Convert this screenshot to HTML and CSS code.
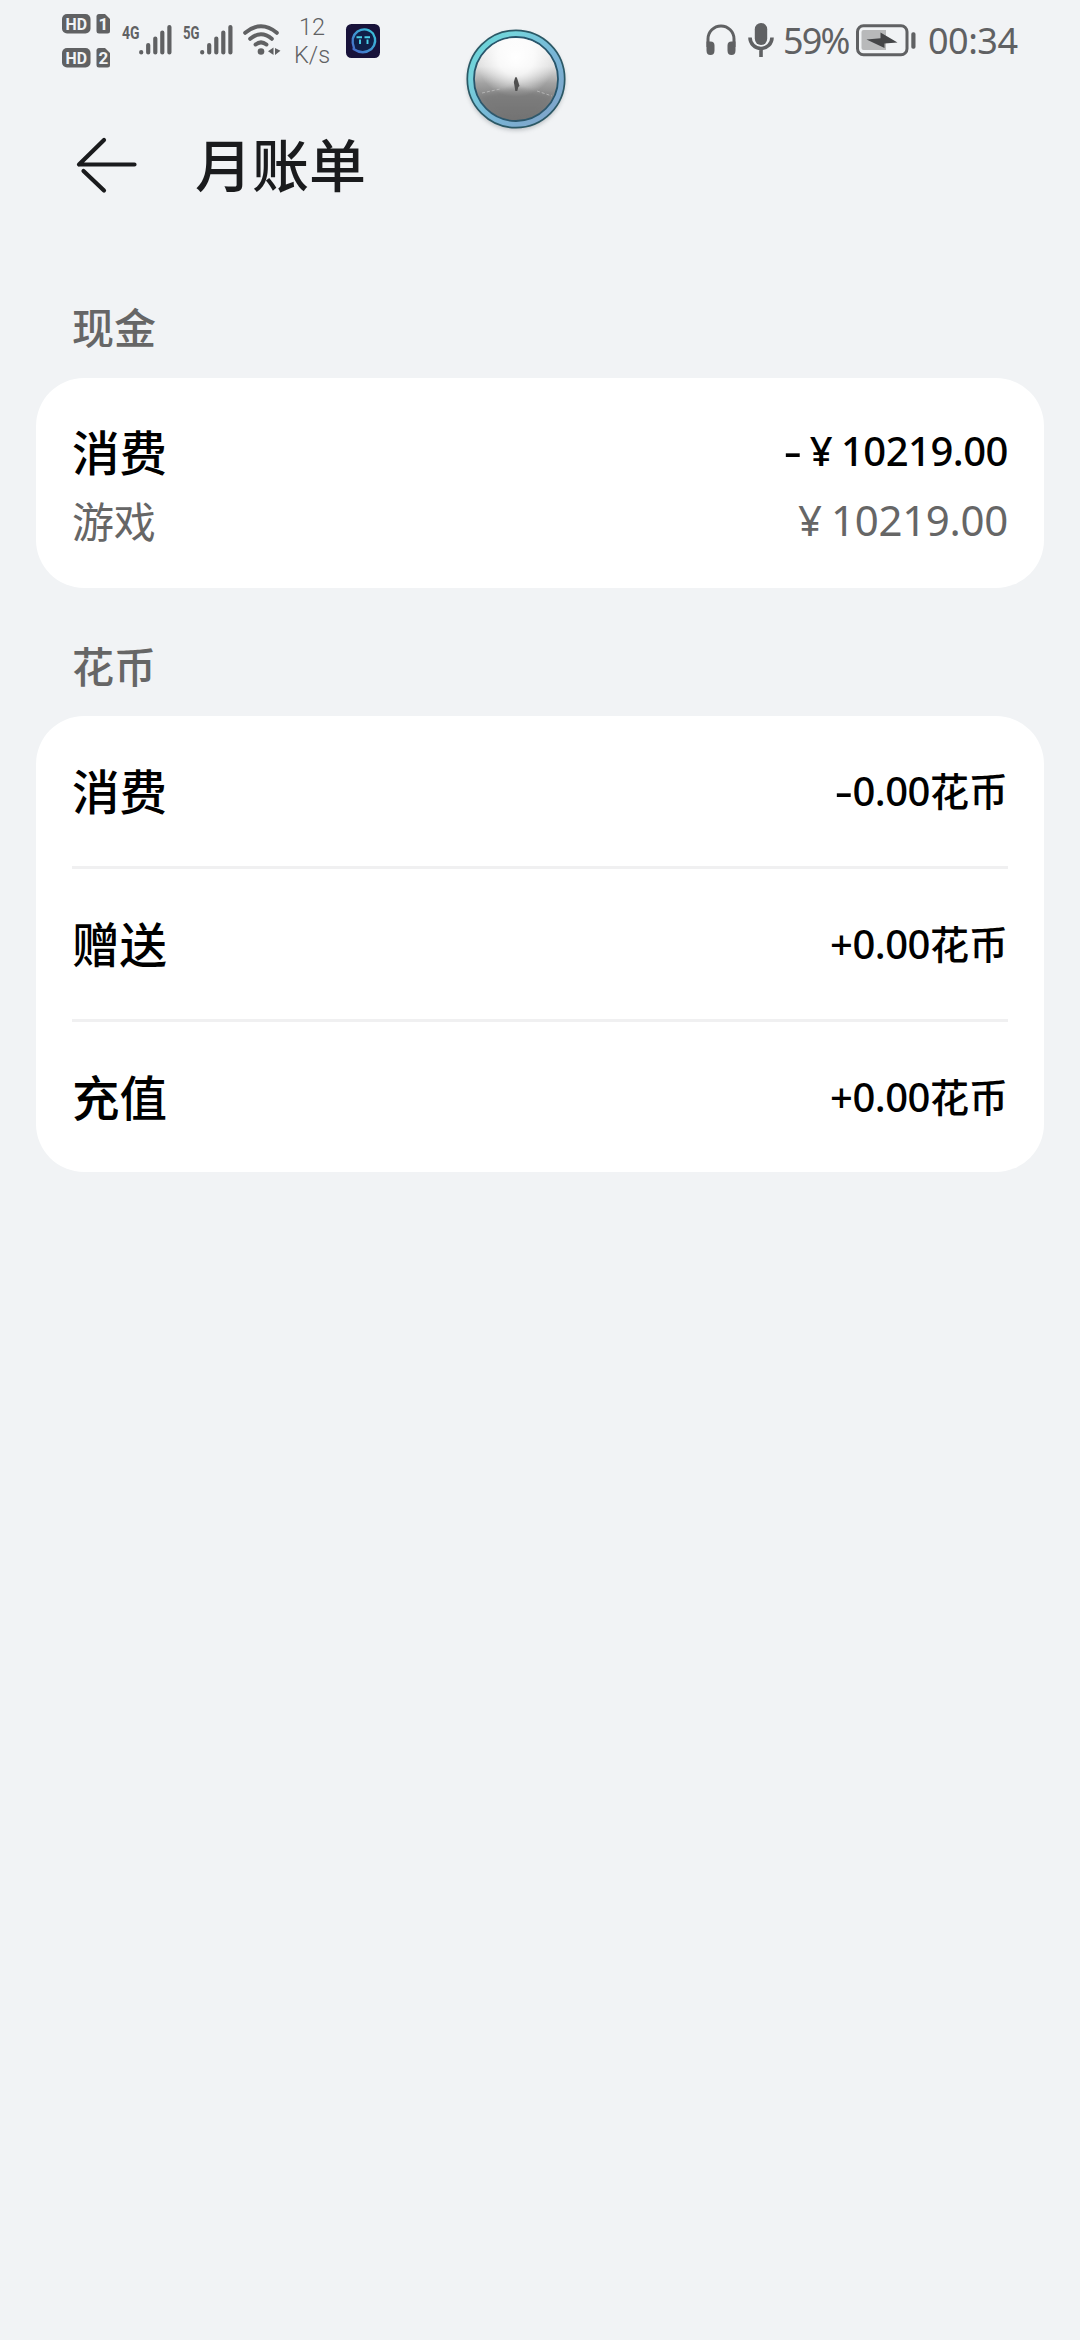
FILE: index.html
```html
<!DOCTYPE html>
<html lang="zh-CN">
<head>
<meta charset="utf-8">
<title>月账单</title>
<link rel="stylesheet" href="styles.css">
</head>
<body>
<header class="status">
  <div class="status-side">
    <svg class="hd" width="50" height="54" viewBox="0 0 50 54">
      <g fill="#606163">
        <rect x="0" y="0" width="28.500" height="19.500" rx="5"/>
        <path d="M37 0h6l5 5v12q0 2.500-2.500 2.500h-8.500q-2.500 0-2.500-2.500v-14.500q0-2.500 2.500-2.500z"/>
        <rect x="0" y="34" width="28.500" height="19.500" rx="5"/>
        <path d="M37 34h6l5 5v12q0 2.500-2.500 2.500h-8.500q-2.500 0-2.500-2.500v-14.500q0-2.500 2.500-2.500z"/>
      </g>
      <g class="hd-text">
        <text x="3.500" y="16" textLength="21.500" lengthAdjust="spacingAndGlyphs">HD</text>
        <text x="36.500" y="16">1</text>
        <text x="3.500" y="50" textLength="21.500" lengthAdjust="spacingAndGlyphs">HD</text>
        <text x="36.500" y="50">2</text>
      </g>
    </svg>
    <svg class="signal signal-first" width="51" height="32" viewBox="0 0 51 32">
      <text class="net" x="0" y="14.500" textLength="17.500" lengthAdjust="spacingAndGlyphs">4G</text>
      <path class="bars" d="M19.200 28v.5M26.200 21v7.500M33.300 14.500v14M40.300 8.500v20M47.400 3v25.500"/>
    </svg>
    <svg class="signal" width="51" height="32" viewBox="0 0 51 32">
      <text class="net" x="0" y="14.500" textLength="16.500" lengthAdjust="spacingAndGlyphs">5G</text>
      <path class="bars" d="M19.200 28v.5M26.200 21v7.500M33.300 14.500v14M40.300 8.500v20M47.400 3v25.500"/>
    </svg>
    <svg class="wifi" width="38" height="32" viewBox="0 0 38 32">
      <g fill="none" stroke="#606163" stroke-width="4" stroke-linecap="round">
        <path d="M2.200 8.800Q18-4.200 33.800 8.800"/>
        <path d="M7.200 14.800Q18 5.800 28.800 14.800"/>
        <path d="M12.600 20.500Q18 16.200 23.400 20.500"/>
      </g>
      <circle cx="18" cy="27.500" r="3.300" fill="#606163"/>
      <path d="M30.500 23.500v7.500l-5.500-3.700zM32 24l5.500 2.700-5.500 4.300z" fill="#606163"/>
    </svg>
    <div class="speed"><span>12</span><span>K/s</span></div>
    <svg class="app" width="34" height="34" viewBox="0 0 34 34">
      <defs><linearGradient id="face" x1="0" y1="1" x2="1" y2="0"><stop offset="0" stop-color="#4668c8"/><stop offset="1" stop-color="#38c8dc"/></linearGradient></defs>
      <rect width="34" height="34" rx="5.500" fill="#18123a"/>
      <circle cx="17.500" cy="17" r="11.500" fill="#101f48"/>
      <path d="M8 24Q4 13 11.500 7.500Q20 2.500 27 9.500Q32 18 25.500 25Q17 31.500 7.500 25" fill="none" stroke="url(#face)" stroke-width="2.300" stroke-linecap="round"/>
      <path d="M10.500 13.200h5.500M18.500 13.200h5.500M14 15.500v4.500M21.500 15.500v4.500" fill="none" stroke="#4ad0e8" stroke-width="1.900"/>
    </svg>
  </div>
  <div class="status-side">
    <svg class="phones" width="30" height="32" viewBox="0 0 30 32">
      <path d="M2 23V15a13 13 0 0 1 26 0v8" fill="none" stroke="#606163" stroke-width="3"/>
      <path d="M.5 17.500h4q4 0 4 4v5q0 4.500-4 4.500t-4-4.500zM29.500 17.500h-4q-4 0-4 4v5q0 4.500 4 4.500t4-4.500z" fill="#606163"/>
    </svg>
    <svg class="mic" width="26" height="34" viewBox="0 0 26 34">
      <rect x="6.800" y="0" width="12.400" height="22" rx="6.200" fill="#606163"/>
      <path d="M2 14.500a11 11 0 0 0 22 0M13 25.500V34" fill="none" stroke="#606163" stroke-width="3.600"/>
    </svg>
    <span class="status-text percent">59%</span>
    <svg class="battery" width="60" height="32" viewBox="0 0 60 32">
      <rect x="1.500" y="1.800" width="49.500" height="29" rx="6" fill="none" stroke="#606163" stroke-width="3"/>
      <path d="M7.500 6H30v20H7.500q-2 0-2-2V8q0-2 2-2z" fill="#b8b9ba"/>
      <path d="M10.500 15.500L24.500 14.300V8.500L41.500 18.500 28.500 19.500V24z" fill="#454648"/>
      <rect x="55.300" y="8.300" width="4.200" height="16.400" rx="1.800" fill="#606163"/>
    </svg>
    <span class="status-text clock">00:34</span>
  </div>
  <svg class="ball" width="110" height="114" viewBox="0 0 110 114">
    <defs>
      <linearGradient id="ring" x1="0" y1="0" x2="1" y2="1"><stop offset="0" stop-color="#60cfd3"/><stop offset=".25" stop-color="#75d3dc"/><stop offset=".55" stop-color="#78b7d7"/><stop offset="1" stop-color="#829ec6"/></linearGradient>
      <linearGradient id="fog" x1="0" y1="0" x2="0" y2="1"><stop offset="0" stop-color="#f4f4f4"/><stop offset=".35" stop-color="#dedede"/><stop offset=".55" stop-color="#a2a2a2"/><stop offset=".7" stop-color="#858585"/><stop offset="1" stop-color="#727272"/></linearGradient>
      <radialGradient id="glow" gradientUnits="userSpaceOnUse" cx="55" cy="32" r="40"><stop offset="0" stop-color="#fff"/><stop offset=".45" stop-color="#fff" stop-opacity=".8"/><stop offset="1" stop-color="#fff" stop-opacity="0"/></radialGradient>
      <filter id="soft" x="-20%" y="-20%" width="140%" height="140%"><feGaussianBlur stdDeviation="2"/></filter>
    </defs>
    <circle cx="55" cy="56.500" r="49" fill="#8d9398" opacity=".5" filter="url(#soft)"/>
    <circle cx="55" cy="54" r="48.700" fill="url(#ring)" stroke="#2b5865" stroke-width="1.700"/>
    <circle cx="55" cy="54" r="42" fill="url(#fog)" stroke="#28556b" stroke-width="1.800"/>
    <circle cx="55" cy="54" r="41" fill="url(#glow)"/>
    <path d="M20 72L53 62h4L90 72Q82 93 55 94Q28 93 20 72z" fill="#727272" opacity=".4" filter="url(#soft)"/>
    <path d="M21 68L39 64M76 66L91 71" stroke="#c5c5c5" stroke-width="1" stroke-dasharray="3 2" opacity=".7"/>
    <path d="M54 53q1-2 2 0l1 3 1.500 5-1.200 1-1 4h-2l-.8-5-.7-4z" fill="#505050"/>
  </svg>
</header>
<main>
  <div class="titlebar">
    <svg class="back" width="62" height="56" viewBox="0 0 62 56">
      <path d="M3 27.500L28 3M3 27.500H58.500M7.500 34L28 53.500" fill="none" stroke="#1a1b1d" stroke-width="4.200" stroke-linecap="round" stroke-linejoin="round"/>
    </svg>
    <h1>月账单</h1>
  </div>
  <h2>现金</h2>
  <section class="card cash">
    <div class="line strong"><span class="name">消费</span><span class="amount"><span class="minus">-</span><span class="yen">¥</span>10219.00</span></div>
    <div class="line sub"><span class="name">游戏</span><span class="amount"><span class="yen">¥</span>10219.00</span></div>
  </section>
  <h2>花币</h2>
  <section class="card coins">
    <div class="line strong"><span class="name">消费</span><span class="amount"><span class="minus">-</span>0.00<span class="unit">花币</span></span></div>
    <div class="line strong"><span class="name">赠送</span><span class="amount">+0.00<span class="unit">花币</span></span></div>
    <div class="line strong"><span class="name">充值</span><span class="amount">+0.00<span class="unit">花币</span></span></div>
  </section>
</main>
</body>
</html>
```
FILE: styles.css
```css
* { box-sizing: border-box; }
body {
  margin: 0;
  min-height: 2340px;
  background: #f1f3f5;
  color: #000;
  font-family: "Noto Sans", "Noto Sans CJK SC", sans-serif;
}
svg { display: block; flex: none; overflow: visible; }
h1, h2 { margin: 0; }

.status {
  position: relative;
  display: flex;
  justify-content: space-between;
  height: 108px;
  padding: 0 61px 0 62px;
  color: #606163;
}
.status-side { display: flex; align-items: flex-start; }
.hd { margin-top: 14px; }
.hd-text { fill: #f1f3f5; font: 700 17px Roboto, sans-serif; }
.net { fill: #606163; font: 700 18.500px Roboto, sans-serif; }
.bars { fill: none; stroke: #606163; stroke-width: 4.200; stroke-linecap: round; }
.signal { margin: 24px 0 0 10px; }
.wifi { margin: 24px 0 0 9px; }
.speed {
  display: flex;
  flex-direction: column;
  align-items: center;
  width: 40px;
  margin: 14px 0 0 11px;
  font: 300 23.500px/27.500px Roboto, sans-serif;
}
.app { margin: 24px 0 0 14px; }
.phones { margin-top: 24px; }
.mic { margin: 23px 0 0 12px; }
.status-text { font-size: 36px; line-height: 50px; margin-top: 16px; white-space: nowrap; }
.percent { width: 72px; padding-left: 9px; letter-spacing: -1.800px; }
.battery { margin: 24px 0 0 10px; }
.clock { width: 91px; margin-left: 12px; letter-spacing: -.5px; }
.ball { position: absolute; left: 461px; top: 25px; }

.titlebar { display: flex; height: 114px; padding-left: 76px; }
.back { margin-top: 29px; }
h1 {
  margin: 12px 0 0 57px;
  color: #1a1b1d;
  font: 500 57px/84px "Noto Sans CJK SC", sans-serif;
}
h2 {
  height: 128px;
  padding: 46px 0 0 72px;
  color: #666;
  font: 500 42px/62px "Noto Sans CJK SC", sans-serif;
}
.titlebar + h2 { height: 156px; padding-top: 73px; }
.card { margin: 0 36px; padding: 0 36px; border-radius: 48px; background: #fff; }
.cash { height: 210px; padding-top: 34px; }
.line { display: flex; align-items: center; justify-content: space-between; }
.name { font-family: "Noto Sans CJK SC", sans-serif; }
.strong { height: 76px; font-weight: 500; }
.strong .name { font-size: 47.500px; }
.strong .amount { font-size: 40px; letter-spacing: -.5px; }
.sub { height: 62px; color: #666; font-size: 42px; letter-spacing: -.3px; }
.yen { display: inline-block; width: 1em; text-align: center; }
.minus { display: inline-block; width: 17px; text-align: center; transform: scaleX(1.4); }
.unit { font-size: 39px; letter-spacing: 0; }
.coins .line { height: 150px; padding-bottom: 4px; }
.coins .line + .line { height: 153px; border-top: 3px solid #f0f0f1; }
```
